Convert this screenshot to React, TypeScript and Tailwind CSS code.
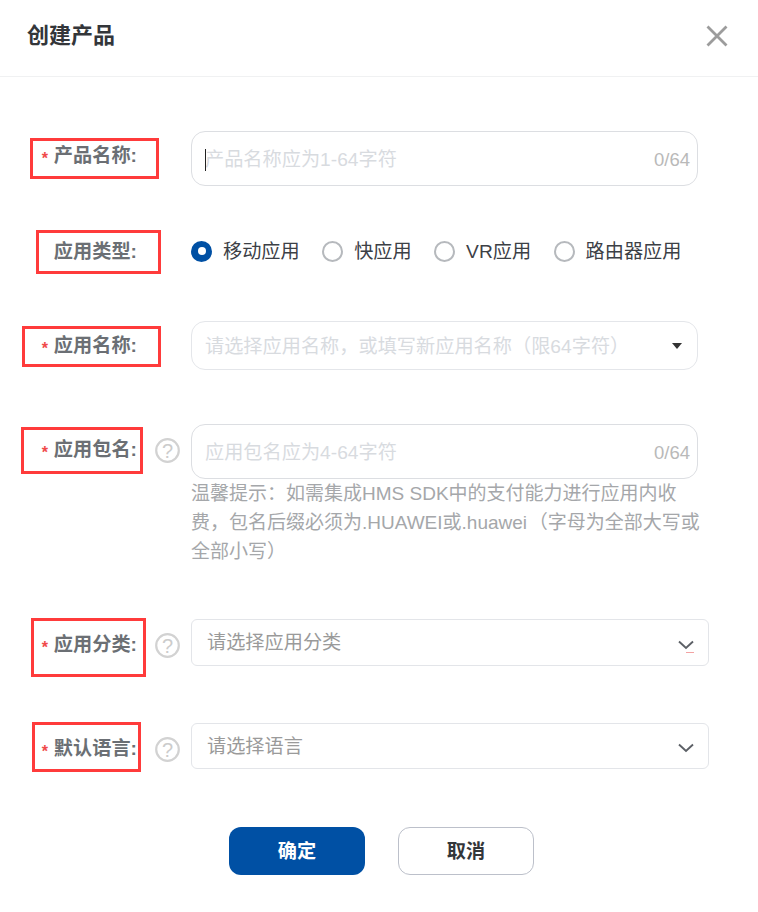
import React from "react";

const font = { fontFamily: '"Liberation Sans","Noto Sans CJK SC",sans-serif' };

function Help() {
  return (
    <svg width="25" height="25" viewBox="0 0 25 25" className="block">
      <circle cx="12.5" cy="12.5" r="11.3" fill="none" stroke="#d2d2d2" strokeWidth="2.2" />
      <text x="12.5" y="19.5" textAnchor="middle" fontSize="20" fill="#cccccc" fontFamily="Liberation Sans">?</text>
    </svg>
  );
}

function Chevron({ mark }: { mark?: boolean }) {
  return (
    <svg width="16" height="14" viewBox="0 0 16 14" className="block">
      <path d="M1 1.5 L8 8 L15 1.5" fill="none" stroke="#5c6066" strokeWidth="1.9" />
      {mark && <path d="M8 12.5 H16" stroke="#f3a3a3" strokeWidth="1" />}
    </svg>
  );
}

function Label({ text, star = true, className }: { text: string; star?: boolean; className: string }) {
  return (
    <div className={`w-[137px] shrink-0 flex justify-end items-center h-[28px] text-[19.2px] leading-[28px] font-bold text-[#6b6f74] ${className}`}>
      {star && <span className="text-[#f04a4a] text-[16px] font-bold mr-[6px] mt-[5px]">*</span>}
      <span className="whitespace-nowrap">{text}</span>
    </div>
  );
}

function Radio({ checked, label }: { checked?: boolean; label: string }) {
  return (
    <label className="flex items-center gap-[11px]">
      {checked ? (
        <span className="w-[21px] h-[21px] rounded-full bg-[#0050a4] flex items-center justify-center">
          <span className="w-[8px] h-[8px] rounded-full bg-white" />
        </span>
      ) : (
        <span className="w-[21px] h-[21px] rounded-full border-2 border-[#b6b9bd] bg-white" />
      )}
      <span className="text-[19.2px] leading-[28px] pt-[2px] text-[#3c4046] whitespace-nowrap">{label}</span>
    </label>
  );
}

function TextField({ placeholder, caret }: { placeholder: string; caret?: boolean }) {
  return (
    <div className="relative w-[507px] h-[55px] rounded-[14px] border border-[#dcdee2] flex items-center pl-[13px] pr-[7px] pt-[2px] bg-white">
      {caret && <span className="absolute left-[13px] top-[17px] w-px h-[22px] bg-[#222]" />}
      <span className="flex-1 text-[19.2px] leading-[28px] text-[#d8dbdf] whitespace-nowrap">{placeholder}</span>
      <span className="text-[18.5px] leading-[28px] text-[#b9b9b9]">0/64</span>
    </div>
  );
}

function SelectField({ placeholder, mark, className }: { placeholder: string; mark?: boolean; className: string }) {
  return (
    <div className={`w-[518px] rounded-[6px] border border-[#e3e5e9] flex items-center pl-[15px] pr-[14px] bg-white ${className}`}>
      <span className="flex-1 text-[19.2px] leading-[28px] text-[#9a9a9a] whitespace-nowrap mt-[1px]">{placeholder}</span>
      <span className="mt-[8px]"><Chevron mark={mark} /></span>
    </div>
  );
}

const boxClass = "absolute border-[3px] border-[#ff3b3b] pointer-events-none";

export default function App() {
  return (
    <div className="w-[758px] h-[912px] bg-white overflow-hidden" style={font}>
      <header className="h-[77px] border-b border-[#f0f1f2] flex items-center justify-between pl-[27px] pr-[30px] pb-[4px]">
        <h1 className="text-[22px] leading-[30px] font-bold text-[#33363a]">创建产品</h1>
        <svg width="22" height="22" viewBox="0 0 22 22" className="block">
          <path d="M1.5 1.5 L20.5 20.5 M20.5 1.5 L1.5 20.5" stroke="#9c9c9c" strokeWidth="2.8" fill="none" />
        </svg>
      </header>

      <main className="flex flex-col pt-[54px]">
        <div className="relative flex">
          <Label text="产品名称:" className="mt-[11px]" />
          <div className="w-[54px] shrink-0" />
          <TextField placeholder="产品名称应为1-64字符" caret />
          <div className={`${boxClass} left-[30px] top-[7px] w-[129px] h-[41px]`} />
        </div>

        <div className="relative flex mt-[50px] h-[30px]">
          <Label text="应用类型:" star={false} className="mt-[2px]" />
          <div className="w-[54px] shrink-0" />
          <div className="flex items-center gap-[22.4px]">
            <Radio checked label="移动应用" />
            <Radio label="快应用" />
            <Radio label="VR应用" />
            <Radio label="路由器应用" />
          </div>
          <div className={`${boxClass} left-[36px] -top-[6px] w-[125px] h-[44px]`} />
        </div>

        <div className="relative flex mt-[55px]">
          <Label text="应用名称:" className="mt-[11px]" />
          <div className="w-[54px] shrink-0" />
          <div className="w-[507px] h-[49px] rounded-[14px] border border-[#e4e6ea] flex items-center pl-[13px] pr-[15px] bg-white">
            <span className="flex-1 text-[19.2px] leading-[28px] pt-[2px] text-[#d8dbdf] whitespace-nowrap">请选择应用名称，或填写新应用名称（限64字符）</span>
            <svg width="10" height="6" viewBox="0 0 10 6" className="block"><path d="M0 0 H10 L5 6 Z" fill="#333" /></svg>
          </div>
          <div className={`${boxClass} left-[22px] top-[5px] w-[139px] h-[41px]`} />
        </div>

        <div className="relative flex mt-[54px]">
          <Label text="应用包名:" className="mt-[12px]" />
          <div className="w-[54px] shrink-0 pl-[18px] pt-[14px]"><Help /></div>
          <div className="flex flex-col">
            <TextField placeholder="应用包名应为4-64字符" />
            <p className="w-[516px] text-[19px] leading-[29px] text-[#a5a7aa]">
              温馨提示：如需集成HMS SDK中的支付能力进行应用内收费，包名后缀必须为.HUAWEI或.huawei{"\u200A"}（字母为全部大写或全部小写）
            </p>
          </div>
          <div className={`${boxClass} left-[21px] top-[3px] w-[122px] h-[47px]`} />
        </div>

        <div className="relative flex mt-[53px]">
          <Label text="应用分类:" className="mt-[12px]" />
          <div className="w-[54px] shrink-0 pl-[18px] pt-[14px]"><Help /></div>
          <SelectField placeholder="请选择应用分类" mark className="h-[47px]" />
          <div className={`${boxClass} left-[31px] -top-px w-[115px] h-[59px]`} />
        </div>

        <div className="relative flex mt-[57px]">
          <Label text="默认语言:" className="mt-[12px]" />
          <div className="w-[54px] shrink-0 pl-[18px] pt-[14px]"><Help /></div>
          <SelectField placeholder="请选择语言" className="h-[46px]" />
          <div className={`${boxClass} left-[32px] -top-px w-[109px] h-[50px]`} />
        </div>

        <div className="flex mt-[58px] pl-[229px] gap-[33px]">
          <button className="w-[136px] h-[48px] rounded-[12px] bg-[#0050a4] text-white text-[19.2px] font-bold pt-[2px]">确定</button>
          <button className="w-[136px] h-[48px] rounded-[12px] bg-white border border-[#bcc0ca] text-[#33363a] text-[19.2px] font-bold pt-[2px]">取消</button>
        </div>
      </main>
    </div>
  );
}
